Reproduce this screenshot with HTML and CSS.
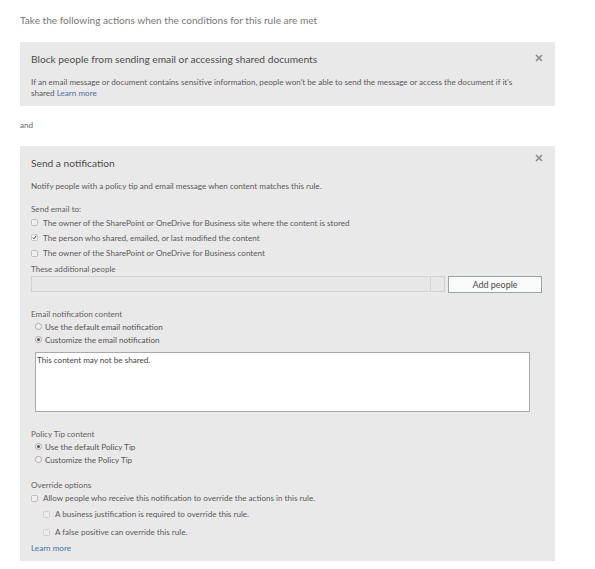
FILE: index.html
```html
<!DOCTYPE html>
<html>
<head>
<meta charset="utf-8">
<link rel="stylesheet" href="styles.css">
</head>
<body>
<div class="page">
  <h1 class="heading">Take the following actions when the conditions for this rule are met</h1>

  <section class="panel panel-block">
    <div class="panel-head">
      <h2 class="panel-title">Block people from sending email or accessing shared documents</h2>
      <span class="close" aria-label="Remove">
        <svg width="8" height="8" viewBox="0 0 8 8"><path d="M1 1L7 7M7 1L1 7" stroke="#8a8a8a" stroke-width="1.6"/></svg>
      </span>
    </div>
    <p class="desc">If an email message or document contains sensitive information, people won't be able to send the message or access the document if it's shared <a class="link" href="#">Learn more</a></p>
  </section>

  <div class="and">and</div>

  <section class="panel panel-notify">
    <div class="panel-head">
      <h2 class="panel-title">Send a notification</h2>
      <span class="close" aria-label="Remove">
        <svg width="8" height="8" viewBox="0 0 8 8"><path d="M1 1L7 7M7 1L1 7" stroke="#8a8a8a" stroke-width="1.6"/></svg>
      </span>
    </div>
    <p class="note">Notify people with a policy tip and email message when content matches this rule.</p>

    <div class="label label-send">Send email to:</div>
    <div class="check-row"><span class="cb"></span><span>The owner of the SharePoint or OneDrive for Business site where the content is stored</span></div>
    <div class="check-row"><span class="cb checked"><svg width="7" height="7" viewBox="0 0 7 7"><path d="M1.2 3.6L2.8 5.3L5.9 1.2" stroke="#333" stroke-width="1.3" fill="none"/></svg></span><span>The person who shared, emailed, or last modified the content</span></div>
    <div class="check-row"><span class="cb"></span><span>The owner of the SharePoint or OneDrive for Business content</span></div>

    <div class="label label-add">These additional people</div>
    <div class="people-row">
      <div class="people-input"><span class="people-field"></span><span class="people-end"></span></div>
      <button class="btn">Add people</button>
    </div>

    <div class="label label-section">Email notification content</div>
    <div class="radio-row"><span class="rb"></span><span>Use the default email notification</span></div>
    <div class="radio-row"><span class="rb on"></span><span>Customize the email notification</span></div>
    <div class="textarea">This content may not be shared.</div>

    <div class="label label-policy">Policy Tip content</div>
    <div class="radio-row"><span class="rb on"></span><span>Use the default Policy Tip</span></div>
    <div class="radio-row"><span class="rb"></span><span>Customize the Policy Tip</span></div>

    <div class="label label-override">Override options</div>
    <div class="check-row row-override"><span class="cb"></span><span>Allow people who receive this notification to override the actions in this rule.</span></div>
    <div class="check-row sub sub1"><span class="cb faint"></span><span>A business justification is required to override this rule.</span></div>
    <div class="check-row sub sub2"><span class="cb faint"></span><span>A false positive can override this rule.</span></div>
    <a class="link learn" href="#">Learn more</a>
  </section>
</div>
</body>
</html>
```

FILE: styles.css
```css
* { box-sizing: border-box; }
html, body { margin: 0; padding: 0; background: #ffffff; }
body {
  font-family: "Lato", "Open Sans", sans-serif;
  color: #5a5a5a;
}
.page {
  width: 555px;
  padding: 13px 0 8px 20px;
}
.heading {
  margin: 0;
  font-weight: normal;
  font-size: 10.1px;
  line-height: 14px;
  color: #777777;
}
.panel {
  background: #e9e9e9;
  padding: 0 12px 0 11px;
}
.panel-block {
  margin-top: 15px;
  height: 64px;
  padding-top: 10px;
}
.panel-head {
  display: flex;
  justify-content: space-between;
  align-items: flex-start;
}
.panel-title {
  margin: 0;
  font-weight: normal;
  font-size: 10.2px;
  line-height: 14px;
  color: #4d4d4d;
}
.close {
  display: flex;
  width: 8px;
  height: 8px;
  margin-top: 2px;
}
.desc {
  margin: 11px 0 0 0;
  font-size: 8.1px;
  line-height: 11px;
  color: #5a5a5a;
  width: 500px;
}
.link { color: #4a72ab; text-decoration: none; }
.and {
  margin-top: 14px;
  font-size: 8.1px;
  line-height: 11px;
  color: #666;
}
.panel-notify {
  margin-top: 15px;
  padding-top: 10px;
  padding-bottom: 7px;
}
.panel-notify .close { margin-top: -2px; }
.note {
  margin: 11px 0 0 0;
  font-size: 8.1px;
  line-height: 11px;
}
.label {
  font-size: 8.1px;
  line-height: 11px;
  color: #626262;
}
.label-send { margin-top: 12px; }
.check-row {
  display: flex;
  align-items: center;
  gap: 5px;
  height: 15.3px;
  font-size: 8.1px;
  color: #5a5a5a;
}
.cb {
  width: 7px;
  height: 7px;
  border: 1px solid #bdbdbd;
  border-radius: 1.5px;
  background: #f0f0f0;
  display: flex;
  align-items: center;
  justify-content: center;
  flex: none;
}
.cb.checked { border-color: #c4c4c4; background: #f4f4f4; }
.cb.faint { border-color: #d0d0d0; background: #ececec; }
.label-add { margin-top: 3px; }
.people-row {
  display: flex;
  align-items: flex-start;
  margin-top: 1px;
  gap: 3px;
}
.people-input {
  display: flex;
  width: 414px;
  height: 16px;
}
.people-field {
  flex: 1;
  border: 1px solid #d2d4d4;
  background: #e7e7e7;
}
.people-end {
  width: 14px;
  border: 1px solid #d2d4d4;
  border-left: none;
  background: #e7e7e7;
}
.btn {
  width: 94px;
  height: 17px;
  padding: 0;
  border: 1px solid #9aa5a2;
  background: #fafafa;
  font-family: inherit;
  font-size: 9px;
  color: #4a4a4a;
}
.label-section { margin-top: 16.5px; }
.radio-row {
  display: flex;
  align-items: center;
  gap: 3.5px;
  height: 13px;
  padding-left: 3.5px;
  font-size: 8.1px;
  color: #555;
}
.rb {
  width: 7px;
  height: 7px;
  border-radius: 50%;
  border: 1px solid #a8a8a8;
  background: #f3f3f3;
  flex: none;
  display: flex;
  align-items: center;
  justify-content: center;
}
.rb.on::after {
  content: "";
  width: 3px;
  height: 3px;
  border-radius: 50%;
  background: #555;
}
.textarea {
  margin: 5.5px 0 0 4px;
  width: 495px;
  height: 60px;
  background: #fff;
  border: 1px solid #a9a9a9;
  padding: 2px 1px;
  font-size: 8.1px;
  line-height: 11px;
  color: #444;
}
.label-policy { margin-top: 17.5px; }
.label-override { margin-top: 13.5px; }
.row-override { height: 15px; }
.check-row.sub { padding-left: 12px; }
.check-row.sub1 { height: 17px; }
.check-row.sub2 { height: 19px; }
.learn {
  display: block;
  margin-top: 1px;
  font-size: 8.1px;
  line-height: 11px;
}
```
